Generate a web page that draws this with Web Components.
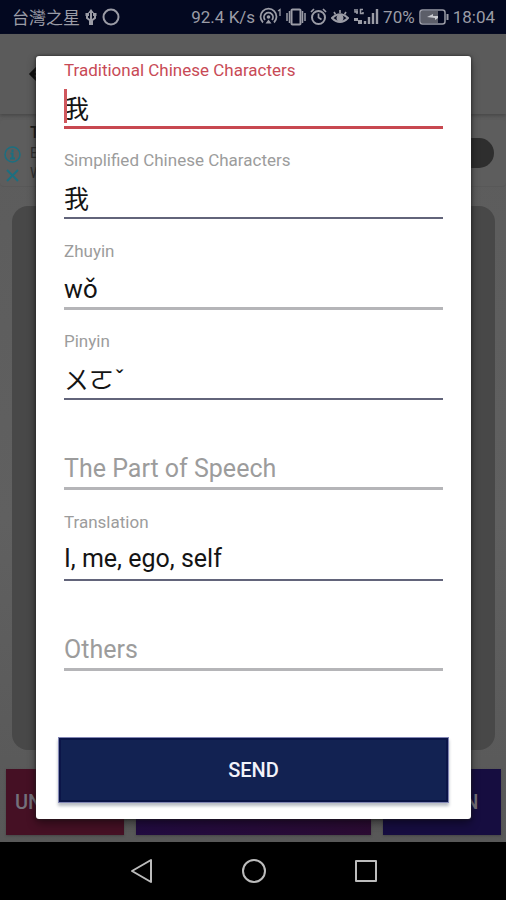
<!DOCTYPE html>
<html lang="en">
<head>
<meta charset="utf-8">
<meta name="viewport" content="width=device-width, initial-scale=1">
<title>Edit word</title>
<style>
  html, body { height: 100%; margin: 0; background: #000; }
  body { font-family: Roboto, "Noto Sans CJK TC", sans-serif; }
</style>
</head>
<body>
<phone-screen>
  <status-bar slot="status"></status-bar>
  <flash-card-page slot="page"></flash-card-page>
  <edit-dialog slot="dialog">
    <text-field label="Traditional Chinese Characters" value="我" state="focused"></text-field>
    <text-field label="Simplified Chinese Characters" value="我"></text-field>
    <text-field label="Zhuyin" value="wǒ" line="soft"></text-field>
    <text-field label="Pinyin" value="ㄨㄛˇ"></text-field>
    <text-field label="The Part of Speech" line="soft"></text-field>
    <text-field label="Translation" value="I, me, ego, self"></text-field>
    <text-field label="Others" line="soft"></text-field>
    <send-button slot="action">SEND</send-button>
  </edit-dialog>
  <nav-bar slot="nav"></nav-bar>
</phone-screen>

<script>
function define(name, html, setup) {
  const template = document.createElement('template');
  template.innerHTML = html;
  customElements.define(name, class extends HTMLElement {
    constructor() {
      super();
      this.attachShadow({ mode: 'open' }).append(template.content.cloneNode(true));
    }
    connectedCallback() { if (setup) setup(this, this.shadowRoot); }
  });
}

define('phone-screen', `
<style>
  :host { display: grid; grid-template-rows: auto 1fr auto; min-height: 100vh; background: #000; }
  main { position: relative; display: grid; }
  .overlay { position: absolute; inset: 0; display: grid; padding: 22px 35px 23px 36px; }
</style>
<slot name="status"></slot>
<main><slot name="page"></slot><div class="overlay"><slot name="dialog"></slot></div></main>
<slot name="nav"></slot>`);

define('status-bar', `
<style>
  :host { display: flex; justify-content: space-between; align-items: center; height: 34px; padding: 0 11px 0 12px;
    background: #030820; color: #9b9ca6; font-size: 17px; line-height: 34px; white-space: nowrap; }
  div { display: flex; align-items: center; gap: 4px; }
  .carrier { font-family: "Noto Sans CJK TC", sans-serif; }
  svg { display: block; fill: none; stroke: currentColor; stroke-width: 2; }
</style>
<div>
  <span class="carrier">台灣之星</span>
  <svg width="14" height="20" viewBox="0 0 14 20"><path d="M7 4v13M3 8v3l4 3 4-3V8"/><path d="M7 2l3 4H4zM5 14h4v4H5zM1.500 6h3.500v3H1.500zM9 6h3.500v3H9z" fill="currentColor" stroke="none"/></svg>
  <svg width="18" height="18" viewBox="0 0 18 18"><circle cx="9" cy="9" r="7.500"/></svg>
</div>
<div>
  <span>92.4 K/s</span>
  <svg width="23" height="20" viewBox="0 0 23 20"><path d="M4 15.500a8 8 0 1 1 11 0M6 13a4.500 4.500 0 1 1 7 0" stroke-width="1.800"/><circle cx="9.500" cy="10" r="1.800" fill="currentColor" stroke="none"/><path d="M6.500 16.500l3-4 3 4z" fill="currentColor" stroke="none"/><path d="M19 4l2-1.500V9" stroke-width="1.300"/></svg>
  <svg width="20" height="18" viewBox="0 0 20 18"><rect x="5.500" y="1.500" width="9" height="15" rx="1"/><path d="M3.500 3v12M1 5v8M16.500 3v12M19 5v8" stroke-width="1.500"/></svg>
  <svg width="17" height="18" viewBox="0 0 17 18"><circle cx="8.500" cy="9.500" r="6.500"/><path d="M8.500 5.500v4l3 2M1 4l3-3M16 4l-3-3" stroke-width="1.700"/></svg>
  <svg width="18" height="18" viewBox="0 0 18 18"><path d="M1 10q8-7.500 16 0-8 8-16 0z"/><circle cx="9" cy="10" r="2.500" fill="currentColor"/><path d="M9 5V2M4.500 6.500L3 4M13.500 6.500L15 4" stroke-width="1.600"/></svg>
  <svg width="26" height="18" viewBox="0 0 26 18"><path d="M2 1v3h3M4 1v5M10 1.500H7.500v4H10V4" stroke-width="1.500"/><path d="M1 10h4v3H1zM5 12h4v4H5z" fill="currentColor" stroke="none"/><path d="M12 16v-3M16 16v-7M20 16V5M24 16V1" stroke-width="2.400"/></svg>
  <span>70%</span>
  <svg width="30" height="16" viewBox="0 0 30 16"><rect x="1" y="1" width="25" height="14" rx="2.500" stroke-width="1.500"/><rect x="2" y="2" width="17" height="12" fill="#5c5e69" stroke="none"/><path d="M28.500 5v6"/><path d="M8 8l6-3v2h5v2l-3 2v-2z" fill="#c9cad0" stroke="none"/></svg>
  <span>18:04</span>
</div>`);

define('flash-card-page', `
<style>
  :host { display: flex; flex-direction: column; min-width: 0; background: linear-gradient(#5b5b5b, #606060 60%, #585858); }
  header { display: flex; align-items: center; height: 80px; padding-left: 28px; box-shadow: 0 2px 3px #4a4a4a; background: #5b5b5b; }
  header button { padding: 0; border: 0; background: none; }
  svg { display: block; }
  .ad { display: flex; align-items: center; gap: 9px; height: 66px; margin-top: 6px; padding: 0 12px 0 4px; border-radius: 4px; background: #5d5d5d; border-bottom: 1px solid #585858; }
  .marks { display: grid; gap: 4px; margin-top: 23px; fill: none; stroke: #1c6f80; stroke-width: 2; }
  .copy { flex: 1; display: grid; font-size: 14px; line-height: 20px; color: #303030; }
  .copy b { color: #1c1c1c; font-size: 16px; font-weight: 500; }
  .pill { width: 72px; height: 30px; border-radius: 15px; background: #2e2e2e; }
  .card { flex: 1; margin: 19px 11px 19px 12px; border-radius: 16px; background: #484848; }
  footer { display: flex; gap: 12px; padding: 0 5px 7px 6px; }
  footer button { flex: 1 1 0; min-width: 0; height: 66px; padding: 0; border: 0; color: #74717b; font: 500 20px Roboto, sans-serif; box-shadow: 0 1px 2px #444; overflow: hidden; }
  footer .no { background: #451024; }
  footer .mid { flex-grow: 2; background: linear-gradient(90deg, #210b40, #2b0b32); }
  footer .yes { background: #160d40; }
</style>
<header><button aria-label="Back"><svg width="20" height="20" viewBox="0 0 20 20" fill="none" stroke="#111" stroke-width="3"><path d="M10 3L3 10l7 7M3 10h16"/></svg></button></header>
<section class="ad">
  <div class="marks">
    <svg width="17" height="17" viewBox="0 0 17 17"><circle cx="8.500" cy="8.500" r="7.500" stroke-width="1.500"/><path d="M8.500 3.500v2.500M6.500 7.500h2v5M6 12.500h5"/></svg>
    <svg width="17" height="17" viewBox="0 0 17 17"><path d="M3 3l11 11M14 3L3 14"/></svg>
  </div>
  <div class="copy"><b>T</b><span>E</span><span>W</span></div>
  <div class="pill"></div>
</section>
<div class="card"></div>
<footer><button class="no">UNKNOWN</button><button class="mid" aria-label="Play"></button><button class="yes">KNOWN</button></footer>`);

define('edit-dialog', `
<style>
  :host { display: flex; flex-direction: column; box-sizing: border-box; padding: 3px 22px 16px; border-radius: 3px; background: #fff; box-shadow: 0 0 3px #222, 0 4px 10px rgba(0,0,0,.45); }
  form { display: contents; }
  .fields { flex: 1; display: flex; flex-direction: column; justify-content: space-between; padding: 0 6px; margin-bottom: 66px; }
</style>
<form><div class="fields"><slot></slot></div><slot name="action"></slot></form>`);

define('text-field', `
<style>
  :host { position: relative; display: grid; grid-template-rows: 20px 50px; color: #141414; }
  label { grid-area: 1 / 1; font-size: 17px; line-height: 22px; color: #9c9c9c; white-space: nowrap; }
  input { grid-area: 2 / 1; box-sizing: border-box; width: 100%; min-width: 0; height: 50px; margin: 0; padding: 8px 0 0; border: 0; border-bottom: 2px solid #62647a;
    border-radius: 0; outline: 0; background: none; color: inherit; font: 25px/38px Roboto, "Noto Sans CJK TC", sans-serif; }
  :host([line="soft"]) input { border-bottom: 3px solid #b5b5b8; }
  :host([state="focused"]) input { border-bottom: 3px solid #c84850; }
  :host([state="focused"]) label { color: #c84a56; }
  :host(:not([value])) label { grid-area: 2 / 1; font-size: 25px; line-height: 58px; pointer-events: none; }
  i { display: none; }
  :host([state="focused"]) i { display: block; position: absolute; left: 0; bottom: 6px; width: 3px; height: 34px; background: #d0575d; }
</style>
<label for="box"></label><input id="box" type="text"><i></i>`, (host, root) => {
  root.querySelector('label').textContent = host.getAttribute('label');
  root.querySelector('input').value = host.getAttribute('value') || '';
});

define('send-button', `
<style>
  :host { display: block; }
  button { display: block; box-sizing: border-box; width: 100%; height: 66px; padding: 0; border: 1px solid #8286b4; background: #122252; color: #f2f3fa;
    font: 500 20px Roboto, sans-serif; box-shadow: inset 0 0 0 2px #0b1548, 0 3px 3px #b9bdc4; }
</style>
<button type="submit"><slot></slot></button>`);

define('nav-bar', `
<style>
  :host { display: block; background: #000; }
  nav { display: flex; justify-content: center; align-items: center; gap: 84px; height: 58px; padding-left: 2px; }
  button { padding: 0; border: 0; background: none; }
  svg { display: block; fill: none; stroke: #bcbcbc; stroke-width: 2; stroke-linejoin: round; }
</style>
<nav aria-label="System">
  <button aria-label="Back"><svg width="28" height="28" viewBox="0 0 28 28"><path d="M23 3v22L4 14z"/></svg></button>
  <button aria-label="Home"><svg width="28" height="28" viewBox="0 0 28 28"><circle cx="14" cy="14" r="11"/></svg></button>
  <button aria-label="Recent apps"><svg width="28" height="28" viewBox="0 0 28 28"><rect x="4" y="4" width="20" height="20"/></svg></button>
</nav>`);
</script>
</body>
</html>
